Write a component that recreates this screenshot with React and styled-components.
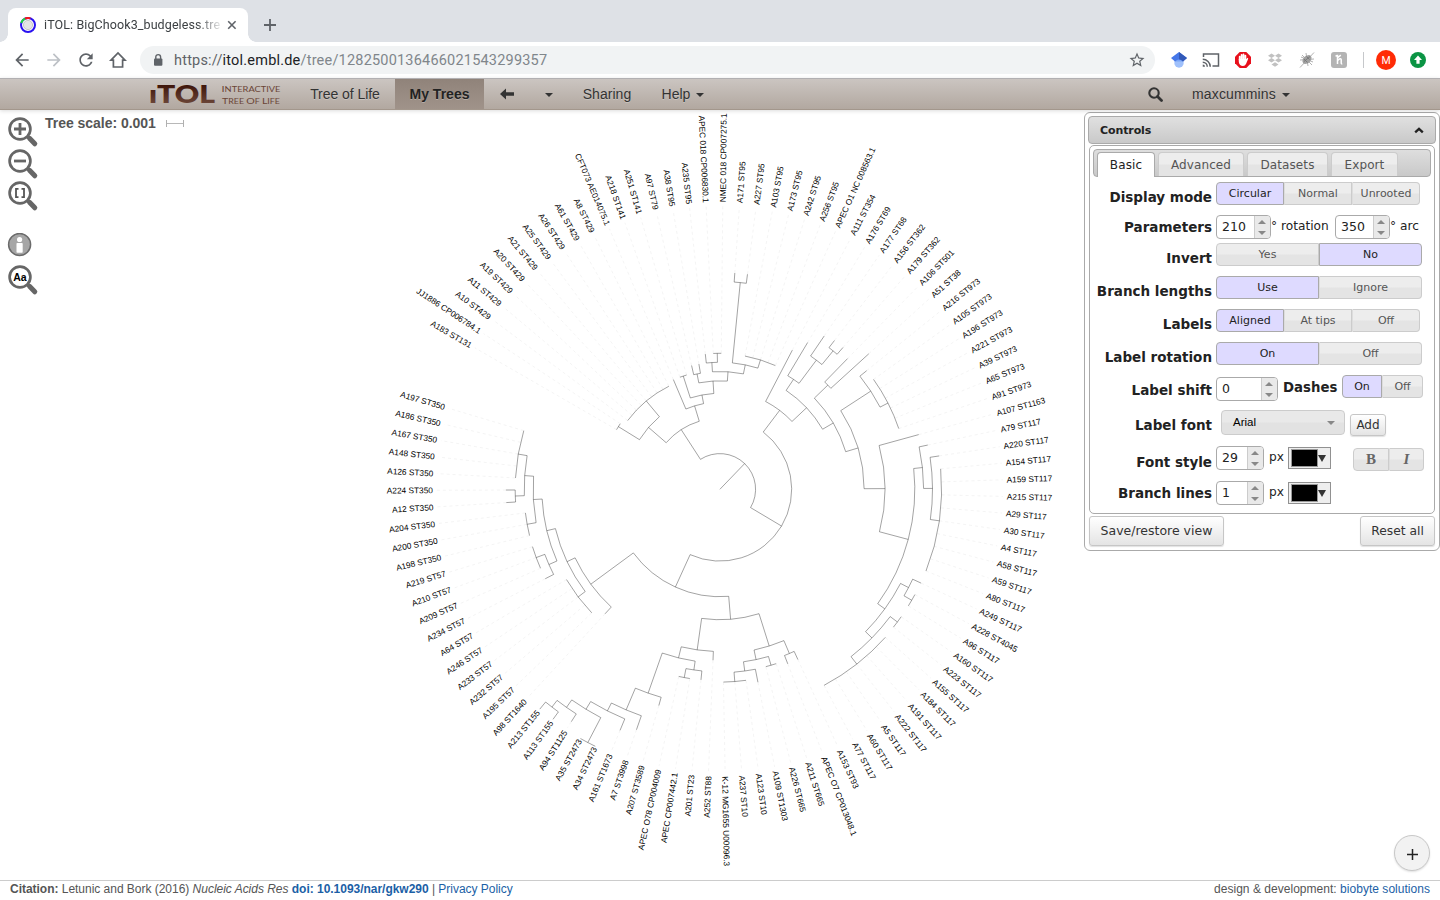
import React from "react";
import styled, { createGlobalStyle, css } from "styled-components";

const GlobalStyle = createGlobalStyle`
  * { box-sizing: border-box; }
  html, body { margin: 0; padding: 0; background: #fff; overflow: hidden; }
  body { font-family: "Liberation Sans", Arial, sans-serif; }
`;

/* ---------- browser chrome ---------- */

const Page = styled.div`
  width: 1440px;
  height: 900px;
  display: flex;
  flex-direction: column;
`;

const TabStrip = styled.div`
  height: 42px;
  flex: none;
  display: flex;
  align-items: flex-end;
  padding-left: 8px;
  background: #dee1e6;
`;

const BrowserTab = styled.div`
  position: relative;
  width: 240px;
  height: 34px;
  display: flex;
  align-items: center;
  padding: 0 10px 0 12px;
  border-radius: 8px 8px 0 0;
  background: #fff;
  &::before, &::after {
    content: "";
    position: absolute;
    bottom: 0;
    width: 8px;
    height: 8px;
  }
  &::before { left: -8px; background: radial-gradient(circle at 0 0, #dee1e6 7.5px, #fff 8px); }
  &::after { right: -8px; background: radial-gradient(circle at 100% 0, #dee1e6 7.5px, #fff 8px); }
`;

const TabTitle = styled.div`
  width: 178px;
  margin-left: 8px;
  padding-bottom: 1px;
  white-space: nowrap;
  font: 12.5px/17px Roboto, sans-serif;
  letter-spacing: 0.1px;
  color: #3c4043;
  mask-image: linear-gradient(90deg, #000 152px, transparent 180px);
`;

const TabClose = styled.svg`margin-left: 5px;`;
const NewTab = styled.svg`margin: 0 0 11px 16px;`;

const AddressRow = styled.div`
  height: 36px;
  flex: none;
  display: flex;
  align-items: center;
  background: #fff;
`;

const NavButtons = styled.div`
  width: 140px;
  display: flex;
  padding-left: 12px;
  gap: 12px;
`;

const Omnibox = styled.div`
  width: 1015px;
  height: 28px;
  display: flex;
  align-items: center;
  padding: 0 9px 0 11px;
  border-radius: 14px;
  background: #f1f3f4;
`;

const Url = styled.div`
  flex: 1;
  margin-left: 9px;
  padding-top: 2px;
  font: 14.5px/20px Roboto, sans-serif;
  letter-spacing: 0.2px;
  color: #80868b;
  b { font-weight: 400; color: #202124; }
  i { font-style: normal; color: #5f6368; }
`;

const Extensions = styled.div`
  display: flex;
  align-items: center;
  flex: 1;
  padding-left: 15px;
`;

const ExtIcon = styled.svg`
  flex: none;
  margin-right: ${(p) => p.$gap ?? 14}px;
`;

/* ---------- site navigation ---------- */

const SiteNav = styled.nav`
  height: 32px;
  flex: none;
  display: flex;
  align-items: stretch;
  padding-left: 148px;
  border-top: 1px solid #b2b0b2;
  border-bottom: 1px solid #a3978c;
  background: linear-gradient(#cbc5c1, #b2a8a0);
  position: relative;
  z-index: 2;
  box-shadow: 0 1px 4px rgba(0, 0, 0, 0.14);
`;

const NavItem = styled.div`
  width: ${(p) => p.$w}px;
  display: flex;
  align-items: center;
  justify-content: ${(p) => (p.$start ? "flex-start" : "center")};
  gap: 6px;
  font-size: 14px;
  letter-spacing: ${(p) => p.$spacing ?? 0}px;
  white-space: nowrap;
  color: #333;
  text-shadow: 0 1px 0 rgba(255, 255, 255, 0.25);
  ${(p) => p.$active && css`
    font-weight: 700;
    color: #222;
    background: linear-gradient(#90837a, #a0938a);
  `}
`;

const Caret = styled.span`
  margin-top: 2px;
  border: 4px solid transparent;
  border-top-color: #333;
  border-bottom: 0;
`;

const NavSpacer = styled.div`flex: 1;`;

/* ---------- workspace ---------- */

const Workspace = styled.main`
  height: 770px;
  flex: none;
  display: grid;
  grid-template-columns: 45px 1039px 356px;
  grid-template-rows: 770px;
`;

const TreeCanvas = styled.svg`
  grid-column: 1 / 4;
  grid-row: 1;
  font-family: "Liberation Sans", Arial, sans-serif;
`;

const ToolColumn = styled.div`
  grid-column: 1;
  grid-row: 1;
  padding: 6px 0 0 7px;
  display: flex;
  flex-direction: column;
`;

const Tool = styled.svg`
  flex: none;
  margin-bottom: ${(p) => p.$after ?? 0}px;
`;

const ScaleLegend = styled.div`
  grid-column: 2;
  grid-row: 1;
  height: 26px;
  display: flex;
  align-items: center;
  gap: 10px;
  font-size: 14px;
  font-weight: 700;
  letter-spacing: -0.03px;
  color: #555;
`;

const ScaleBar = styled.span`
  width: 18px;
  height: 7px;
  border: solid #b0b0b0;
  border-width: 0 1px;
  background: linear-gradient(#b8b8b8, #b8b8b8) center / 100% 1px no-repeat;
`;

const SideColumn = styled.aside`
  grid-column: 3;
  grid-row: 1;
  display: flex;
  flex-direction: column;
  justify-content: space-between;
  align-items: flex-end;
  padding: 2px 0 9px 0;
  font-family: "DejaVu Sans", Verdana, sans-serif;
`;

const AddButton = styled.button`
  width: 36px;
  height: 36px;
  margin-right: 10px;
  padding: 2px 0 0;
  display: flex;
  align-items: center;
  justify-content: center;
  border: 1px solid #c8c8c8;
  border-radius: 50%;
  background: #f2f2f2;
  box-shadow: 0 1px 2px rgba(0, 0, 0, 0.12);
`;

/* ---------- controls panel ---------- */

const Panel = styled.section`
  width: 356px;
  height: 439px;
  padding: 3px 3px 0 3px;
  border: 1px solid #aaa;
  border-radius: 6px;
  background: #fff;
`;

const PanelHeader = styled.header`
  height: 28px;
  display: flex;
  align-items: center;
  justify-content: space-between;
  padding: 0 11px;
  border: 1px solid #aaa;
  border-radius: 4px;
  background: linear-gradient(#e0e0e0, #c9c9c9);
  font-size: 11px;
  font-weight: 700;
  letter-spacing: -0.1px;
  color: #222;
`;

const PanelBody = styled.div`
  height: 369px;
  margin: 1px 1px 0 1px;
  padding: 3px;
  border: 1px solid #aaa;
  border-radius: 5px;
`;

const Tabs = styled.div`
  height: 28px;
  display: flex;
  align-items: flex-end;
  gap: 3px;
  padding-left: 3px;
  border: 1px solid #aaa;
  border-radius: 4px;
  background: linear-gradient(#dedede, #c9c9c9);
`;

const PanelTab = styled.div`
  width: ${(p) => p.$w}px;
  height: 24px;
  display: flex;
  align-items: center;
  justify-content: center;
  border: 1px solid #ccc;
  border-bottom: 0;
  border-radius: 4px 4px 0 0;
  background: linear-gradient(#ededed 49%, #e4e4e4 51%);
  font-size: 12px;
  letter-spacing: 0.1px;
  color: #555;
  ${(p) => p.$active && css`
    height: 25px;
    margin-bottom: -1px;
    padding-bottom: 1px;
    border-color: #aaa;
    background: #fff;
    color: #222;
  `}
`;

const Rows = styled.div`margin-top: 5px;`;

const Row = styled.div`
  height: ${(p) => p.$h}px;
  display: flex;
  align-items: flex-start;
`;

const RowLabel = styled.div`
  width: 119px;
  margin: ${(p) => p.$top}px 4px 0 0;
  text-align: right;
  white-space: nowrap;
  font-size: 13.5px;
  font-weight: 700;
  line-height: 16px;
  color: #222;
`;

const Toggle = styled.div`
  display: flex;
  height: 23px;
  margin: ${(p) => p.$top ?? 0}px 0 0 ${(p) => p.$left ?? 0}px;
`;

const Segment = styled.button`
  width: ${(p) => p.$w}px;
  height: 23px;
  padding: 0;
  border: 1px solid #ccc;
  background: linear-gradient(#ededed 49%, #e4e4e4 51%);
  font: 11px "DejaVu Sans", Verdana, sans-serif;
  color: #555;
  &:first-child { border-radius: 4px 0 0 4px; }
  &:last-child { border-radius: 0 4px 4px 0; }
  & + & { border-left-color: #ddd; }
  ${(p) => p.$on && css`
    border-color: #aaa !important;
    background: #dedaff;
    color: #222;
  `}
  ${(p) => p.$glyph && css`
    font: 700 15px "Liberation Serif", serif;
    color: #666;
  `}
`;

const SpinnerBox = styled.div`
  width: ${(p) => p.$w}px;
  height: 24px;
  margin: ${(p) => p.$top ?? 0}px 0 0 ${(p) => p.$left ?? 0}px;
  flex: none;
  display: flex;
  overflow: hidden;
  border: 1px solid #aaa;
  border-radius: 4px;
  background: #fff;
`;

const SpinnerValue = styled.div`
  flex: 1;
  padding-left: 5px;
  font-size: 12.5px;
  line-height: 21px;
  color: #222;
`;

const SpinnerArrows = styled.div`
  width: 16px;
  padding-right: 1px;
  display: flex;
  flex-direction: column;
  align-items: center;
  justify-content: center;
  gap: 7px;
  border-left: 1px solid #ccc;
  background: #e9e9e9;
  &::before, &::after { content: ""; border: 4px solid transparent; }
  &::before { border-top: 0; border-bottom-color: #888; }
  &::after { border-bottom: 0; border-top-color: #888; }
`;

const Unit = styled.span`
  width: ${(p) => (p.$w ? `${p.$w}px` : "auto")};
  margin: ${(p) => p.$top}px 0 0 ${(p) => p.$left}px;
  font-size: ${(p) => p.$size ?? 12.2}px;
  line-height: 16px;
  white-space: pre;
  font-weight: ${(p) => (p.$bold ? 700 : 400)};
  color: #222;
`;

const FontSelect = styled.div`
  width: 124px;
  height: 25px;
  margin-left: 5px;
  padding: 0 9px 1px 11px;
  display: flex;
  align-items: center;
  justify-content: space-between;
  border: 1px solid #ccc;
  border-radius: 4px;
  background: linear-gradient(#e9e9e9 49%, #e2e2e2 51%);
  font: 11.5px "Liberation Sans", Arial, sans-serif;
  color: #000;
  &::after { content: ""; border: 4px solid transparent; border-bottom: 0; border-top-color: #888; margin-top: 2px; }
`;

const RaisedButton = styled.button`
  width: ${(p) => p.$w}px;
  height: ${(p) => p.$h}px;
  margin: ${(p) => p.$top ?? 0}px 0 0 ${(p) => p.$left ?? 0}px;
  padding: 0 0 1px;
  white-space: nowrap;
  border: 1px solid #c6c6c6;
  border-radius: 3px;
  background: linear-gradient(#fff, #e4e4e4);
  box-shadow: 0 1px 1px rgba(0, 0, 0, 0.12);
  font: ${(p) => p.$size}px "DejaVu Sans", Verdana, sans-serif;
  color: #333;
`;

const ColorPick = styled.div`
  width: 43px;
  height: 22px;
  margin: 1px 0 0;
  padding: 0 4px 0 2px;
  display: flex;
  align-items: center;
  justify-content: space-between;
  border: 1px solid #919191;
  background: #eee;
  &::before { content: ""; width: 26px; height: 16px; border: 1px solid #999; background: #000; }
  &::after { content: ""; border: 4px solid transparent; border-top: 7px solid #333; border-bottom: 0; }
`;

const PanelFooter = styled.footer`
  display: flex;
  justify-content: space-between;
  margin: 2px 1px 0 1px;
`;

/* ---------- page footer ---------- */

const Footer = styled.footer`
  height: 20px;
  flex: none;
  display: flex;
  justify-content: space-between;
  padding: 0 10px;
  border-top: 1px solid #ccc;
  font-size: 12px;
  line-height: 16px;
  color: #555;
  a { color: #1c5fa6; }
`;

const FooterText = styled.span`letter-spacing: ${(p) => p.$spacing}px;`;

/* ---------- phylogeny data ---------- */

const LABELS = [
  "A183 ST131", "JJ1886 CP006784.1", "A10 ST429", "A11 ST429", "A19 ST429", "A20 ST429", "A21 ST429",
  "A25 ST429", "A26 ST429", "A61 ST429", "A8 ST429", "CFT073 AE014075.1", "A218 ST141", "A251 ST141",
  "A97 ST79", "A38 ST95", "A235 ST95", "APEC 018 CP006830.1", "NMEC 018 CP007275.1", "A171 ST95",
  "A227 ST95", "A103 ST95", "A173 ST95", "A242 ST95", "A256 ST95", "APEC O1 NC 008563.1", "A111 ST354",
  "A176 ST69", "A177 ST68", "A156 ST362", "A179 ST362", "A106 ST501", "A51 ST38", "A216 ST973",
  "A105 ST973", "A196 ST973", "A221 ST973", "A39 ST973", "A65 ST973", "A91 ST973", "A107 ST1163",
  "A79 ST117", "A220 ST117", "A154 ST117", "A159 ST117", "A215 ST117", "A29 ST117", "A30 ST117",
  "A4 ST117", "A58 ST117", "A59 ST117", "A80 ST117", "A249 ST117", "A228 ST4045", "A96 ST117",
  "A160 ST117", "A223 ST117", "A155 ST117", "A184 ST117", "A191 ST117", "A222 ST117", "A5 ST117",
  "A60 ST117", "A77 ST117", "A153 ST93", "APEC O7 CP013048.1", "A211 ST665", "A226 ST665",
  "A109 ST1303", "A123 ST10", "A237 ST10", "K-12 MG1655 U00096.3", "A252 ST88", "A201 ST23",
  "APEC CP007442.1", "APEC O78 CP004009", "A207 ST3589", "A7 ST3998", "A161 ST1673", "A34 ST2473",
  "A35 ST2473", "A94 ST1125", "A113 ST155", "A213 ST155", "A98 ST1640", "A195 ST57", "A232 ST57",
  "A233 ST57", "A246 ST57", "A64 ST57", "A234 ST57", "A209 ST57", "A210 ST57", "A219 ST57",
  "A198 ST350", "A200 ST350", "A204 ST350", "A12 ST350", "A224 ST350", "A126 ST350", "A148 ST350",
  "A167 ST350", "A186 ST350", "A197 ST350",
];

// A clade is [radius, ...children]; a bare number is a leaf at that radius.
const tips = (radius, count) => [radius, ...Array(count).fill(radius)];

const TREE = [35.7,
  [71.1,
    [94.5, tips(119.3, 2), tips(115, 9)],
    [87.2, 119.2,
      [96, tips(119, 2),
        [108.5,
          [117.6, 127, 127],
          [117.8, [127, 136, tips(136, 2)], [127, [207.7, 216.8, 216.8], tips(135.6, 5)]],
        ],
      ],
    ],
  ],
  [71.8,
    [99, 156.9,
      [119,
        [132.3, 171, [161.2, 185.4, [178.8, 187.8, 187.8]]],
        [131.3,
          [150, 182.7, 201.3],
          [144.2,
            [180, 188.7, tips(188.9, 6)],
            [165.1, 206.2,
              [194.9,
                [203.7, 212.5, [212.6, 221.8, tips(221.7, 9)]],
                [203.7,
                  [212.7, 222, tips(221.6, 2)],
                  [212.6, tips(221.6, 2), tips(222, 7)],
                ],
              ],
            ],
          ],
        ],
      ],
    ],
    [107.4,
      [130.4,
        [164.3,
          [178.3, 187.3, 187.3],
          [174.1, tips(183.2, 2), [183.4, 196.7, tips(192.8, 3)]],
        ],
        [162.2, 171.1,
          [173.6,
            [182.5, 191.5, tips(191.6, 2)],
            [216.1, 224.7,
              [239.7, 254.5,
                [248.5, 260.9,
                  [257.5, tips(285.6, 2),
                    [266.6, 275.8, [275, 284.2, 284.2]],
                  ],
                ],
              ],
            ],
          ],
        ],
      ],
      [160.2, 169.4,
        [169.1, tips(178, 5),
          [178,
            [186.8, 196.2, tips(196, 3)],
            [186.8, tips(195.9, 3), [195.7, [204.7, 214, 214], tips(204.7, 5)]],
          ],
        ],
      ],
    ],
  ],
];

const CENTER = [719.9, 379.3];
const FIRST_ANGLE = 210;
const STEP = 350 / 104;
const LABEL_RADIUS = 287;

const point = (radius, angle) => {
  const t = (angle * Math.PI) / 180;
  return [CENTER[0] + radius * Math.cos(t), CENTER[1] + radius * Math.sin(t)].map((n) => n.toFixed(2)).join(" ");
};

function layoutTree() {
  const branches = [];
  const leaves = [];
  const place = (node, parentRadius) => {
    if (typeof node === "number") {
      const angle = FIRST_ANGLE + leaves.length * STEP;
      leaves.push({ angle, radius: node });
      if (node > parentRadius) branches.push(`M${point(parentRadius, angle)}L${point(node, angle)}`);
      return angle;
    }
    const [radius, ...children] = node;
    const angles = children.map((child) => place(child, radius));
    const first = angles[0];
    const last = angles[angles.length - 1];
    const middle = (first + last) / 2;
    const large = last - first > 180 ? 1 : 0;
    branches.push(`M${point(radius, first)}A${radius} ${radius} 0 ${large} 1 ${point(radius, last)}`);
    branches.push(`M${point(parentRadius, middle)}L${point(radius, middle)}`);
    return middle;
  };
  place(TREE, 0);
  return { branches, leaves };
}

const { branches, leaves } = layoutTree();

function Phylogeny() {
  return (
    <TreeCanvas width="1440" height="770" viewBox="0 0 1440 770">
      <g stroke="#f1f1f1" strokeWidth="0.8" strokeDasharray="3 3" fill="none">
        {leaves.map(({ angle, radius }, i) => (
          radius < 278 && <path key={i} d={`M${point(radius, angle)}L${point(283, angle)}`} />
        ))}
      </g>
      <path d={branches.join("")} fill="none" stroke="#000" strokeOpacity="0.72" strokeWidth="0.5" />
      <g fontSize="8.3" fill="#000">
        {leaves.map(({ angle }, i) => {
          const a = angle % 360;
          const flip = a > 90 && a < 270;
          return (
            <text
              key={i}
              transform={`translate(${point(LABEL_RADIUS, angle)}) rotate(${(flip ? a + 180 : a).toFixed(2)})`}
              y="3"
              textAnchor={flip ? "end" : "start"}
            >
              {LABELS[i]}
            </text>
          );
        })}
      </g>
    </TreeCanvas>
  );
}

/* ---------- small pieces ---------- */

function Magnifier({ children, after }) {
  return (
    <Tool width="32" height="32" viewBox="0 0 32 32" $after={after}>
      <path d="M22.5 22.3L27.8 27.8" stroke="#666" strokeWidth="5" strokeLinecap="round" />
      <path d="M20 20l3 3" stroke="#666" strokeWidth="2.5" />
      <circle cx="13" cy="13" r="10.4" fill="#fff" stroke="#666" strokeWidth="2.7" />
      {children}
    </Tool>
  );
}

function Spinner({ value, ...box }) {
  return (
    <SpinnerBox {...box}>
      <SpinnerValue>{value}</SpinnerValue>
      <SpinnerArrows />
    </SpinnerBox>
  );
}

function Choice({ options, on, widths, ...box }) {
  return (
    <Toggle {...box}>
      {options.map((name, i) => (
        <Segment key={name} $w={widths[i]} $on={name === on}>{name}</Segment>
      ))}
    </Toggle>
  );
}

function ControlsPanel() {
  return (
    <Panel>
      <PanelHeader>
        Controls
        <svg width="10" height="7" viewBox="0 0 10 7"><path d="M1.2 5.4L5 1.8l3.8 3.6" fill="none" stroke="#222" strokeWidth="2.3" /></svg>
      </PanelHeader>
      <PanelBody>
        <Tabs>
          <PanelTab $w={58} $active>Basic</PanelTab>
          <PanelTab $w={86}>Advanced</PanelTab>
          <PanelTab $w={81}>Datasets</PanelTab>
          <PanelTab $w={67}>Export</PanelTab>
        </Tabs>
        <Rows>
          <Row $h={33}>
            <RowLabel $top={7}>Display mode</RowLabel>
            <Choice options={["Circular", "Normal", "Unrooted"]} on="Circular" widths={[68, 68, 68]} />
          </Row>
          <Row $h={28}>
            <RowLabel $top={4}>Parameters</RowLabel>
            <Spinner $w={55} value="210" />
            <Unit $left={0} $top={3} $w={64}>° rotation</Unit>
            <Spinner $w={55} value="350" />
            <Unit $left={0} $top={3}>° arc</Unit>
          </Row>
          <Row $h={33}>
            <RowLabel $top={7}>Invert</RowLabel>
            <Choice options={["Yes", "No"]} on="No" widths={[103, 103]} />
          </Row>
          <Row $h={33}>
            <RowLabel $top={7}>Branch lengths</RowLabel>
            <Choice options={["Use", "Ignore"]} on="Use" widths={[103, 103]} />
          </Row>
          <Row $h={33}>
            <RowLabel $top={7}>Labels</RowLabel>
            <Choice options={["Aligned", "At tips", "Off"]} on="Aligned" widths={[68, 68, 68]} />
          </Row>
          <Row $h={33}>
            <RowLabel $top={7}>Label rotation</RowLabel>
            <Choice options={["On", "Off"]} on="On" widths={[103, 103]} />
          </Row>
          <Row $h={35}>
            <RowLabel $top={7}>Label shift</RowLabel>
            <Spinner $w={62} $top={2} value="0" />
            <Unit $left={5} $top={5} $size={13.3} $bold $w={59}>Dashes</Unit>
            <Choice options={["On", "Off"]} on="On" widths={[40, 41]} />
          </Row>
          <Row $h={36}>
            <RowLabel $top={7}>Label font</RowLabel>
            <FontSelect>Arial</FontSelect>
            <RaisedButton $w={36} $h={22} $top={4} $left={5} $size={12}>Add</RaisedButton>
          </Row>
          <Row $h={35}>
            <RowLabel $top={8}>Font style</RowLabel>
            <Spinner $w={48} value="29" />
            <Unit $left={5} $top={3} $w={19}>px</Unit>
            <ColorPick />
            <Toggle $left={22} $top={2}>
              <Segment $w={36} $glyph>B</Segment>
              <Segment $w={35} $glyph><i>I</i></Segment>
            </Toggle>
          </Row>
          <Row $h={30}>
            <RowLabel $top={4}>Branch lines</RowLabel>
            <Spinner $w={48} value="1" />
            <Unit $left={5} $top={3} $w={19}>px</Unit>
            <ColorPick />
          </Row>
        </Rows>
      </PanelBody>
      <PanelFooter>
        <RaisedButton $w={135} $h={30} $size={12.5}>Save/restore view</RaisedButton>
        <RaisedButton $w={75} $h={30} $size={12.3}>Reset all</RaisedButton>
      </PanelFooter>
    </Panel>
  );
}

function BrowserBar() {
  return (
    <>
      <TabStrip>
        <BrowserTab>
          <svg width="16" height="16" viewBox="0 0 16 16">
            <circle cx="8" cy="8" r="4.6" fill="#e4e4e4" stroke="#bbb" strokeWidth="0.8" />
            <circle cx="8" cy="8" r="7" fill="none" stroke="#2a12f0" strokeWidth="2" />
            <path d="M5 1.7A7 7 0 0 1 10.4 1.4" fill="none" stroke="#f01818" strokeWidth="2" />
            <path d="M1.2 6A7 7 0 0 1 5 1.7" fill="none" stroke="#20d838" strokeWidth="2" />
          </svg>
          <TabTitle>iTOL: BigChook3_budgeless.tre</TabTitle>
          <TabClose width="10" height="10" viewBox="0 0 10 10"><path d="M1.2 1.2l7.4 7.6M8.6 1.2L1.2 8.8" stroke="#5f6368" strokeWidth="1.6" /></TabClose>
        </BrowserTab>
        <NewTab width="12" height="12" viewBox="0 0 12 12"><path d="M6 0v12M0 6h12" stroke="#5f6368" strokeWidth="1.8" /></NewTab>
      </TabStrip>
      <AddressRow>
        <NavButtons>
          <svg width="20" height="20" viewBox="0 0 24 24"><path fill="#5f6368" d="M20 11H7.83l5.59-5.59L12 4l-8 8 8 8 1.41-1.41L7.83 13H20v-2z" /></svg>
          <svg width="20" height="20" viewBox="0 0 24 24"><path fill="#bdc1c6" d="M12 4l-1.41 1.41L16.17 11H4v2h12.17l-5.58 5.59L12 20l8-8z" /></svg>
          <svg width="20" height="20" viewBox="0 0 24 24"><path fill="#5f6368" d="M17.65 6.35C16.2 4.9 14.21 4 12 4c-4.42 0-7.99 3.58-7.99 8s3.57 8 7.99 8c3.73 0 6.84-2.55 7.73-6h-2.08c-.82 2.33-3.04 4-5.65 4-3.31 0-6-2.69-6-6s2.69-6 6-6c1.66 0 3.14.69 4.22 1.78L13 11h7V4l-2.35 2.35z" /></svg>
          <svg width="20" height="20" viewBox="0 0 20 20"><path d="M3 10.2L10 3l7 7.2h-2.4V17H5.4v-6.8z" fill="none" stroke="#5f6368" strokeWidth="1.7" /></svg>
        </NavButtons>
        <Omnibox>
          <svg width="14" height="14" viewBox="0 0 14 14"><rect x="3" y="5.5" width="8.4" height="7.2" rx="1" fill="#5f6368" /><path d="M4.8 6V4a2.4 2.4 0 0 1 4.8 0v2" fill="none" stroke="#5f6368" strokeWidth="1.4" /></svg>
          <Url><i>https://</i><b>itol.embl.de</b>/tree/1282500136466021543299357</Url>
          <svg width="18" height="18" viewBox="0 0 24 24"><path fill="#5f6368" d="M22 9.24l-7.19-.62L12 2 9.19 8.63 2 9.24l5.46 4.73L5.82 21 12 17.27 18.18 21l-1.63-7.03L22 9.24zM12 15.4l-3.76 2.27 1-4.28-3.32-2.88 4.38-.38L12 6.1l1.71 4.04 4.38.38-3.32 2.88 1 4.28L12 15.4z" /></svg>
        </Omnibox>
        <Extensions>
          <ExtIcon width="18" height="18" viewBox="0 0 18 18">
            <circle cx="9" cy="12" r="4.7" fill="#9fc0fb" />
            <path d="M4.5 10.5a5 5 0 0 1 9 0z" fill="#7aa5f5" />
            <path d="M9 1L1 7l4 3.5Q9 6.5 13 10.5L17 7z" fill="#4577e8" />
            <path d="M9 1l8 6-4 3.500Q11.500 8.500 9 8.200z" fill="#3259b8" />
          </ExtIcon>
          <ExtIcon width="18" height="18" viewBox="0 0 24 24">
            <path d="M2 8V4h20v16h-8" fill="none" stroke="#5f6368" strokeWidth="2" />
            <path d="M1 11a10 10 0 0 1 10 10M1 15a6 6 0 0 1 6 6" fill="none" stroke="#5f6368" strokeWidth="2" />
            <path d="M1 18v3h3a3 3 0 0 0-3-3z" fill="#5f6368" />
          </ExtIcon>
          <ExtIcon width="18" height="18" viewBox="0 0 18 18">
            <path d="M5.7 1h6.6L17 5.7v6.6L12.3 17H5.7L1 12.3V5.7z" fill="#e8101c" />
            <path d="M5.7 9V5.7M7.6 8.5V3.9M9.5 8.5V3.5M11.4 8.5V4.7" stroke="#fff" strokeWidth="1.8" strokeLinecap="round" />
            <path d="M4.8 8h7.5l1.3-1.3q1 .3.4 1.5L12 13q-1 2-3 2-3.600 0-4.200-4z" fill="#fff" />
          </ExtIcon>
          <ExtIcon width="18" height="18" viewBox="0 0 18 18"><path fill="#c1c1c1" d="M5.5 2.5L9 4.8 5.5 7 2 4.8zM12.5 2.5L16 4.8 12.5 7 9 4.8zM5.5 7L9 9.3l-3.5 2.2L2 9.3zM12.5 7L16 9.3l-3.5 2.2L9 9.3zM9 11.3l3.5 2.2L9 15.7l-3.5-2.2z" /></ExtIcon>
          <ExtIcon width="18" height="18" viewBox="0 0 18 18">
            <path d="M2 16.5L16 1.5M4 4l10 10M2 9l14-1M8 2l2 13M3 6l12 5" stroke="#a9a9a9" strokeWidth="0.9" />
            <ellipse cx="9" cy="8.5" rx="5.2" ry="3.6" transform="rotate(-42 9 8.5)" fill="#a0a0a0" />
            <path d="M6 8l3.5 3.5M8.5 5.5l3 3M6 10.5l6-5" stroke="#777" strokeWidth="0.9" />
          </ExtIcon>
          <ExtIcon width="18" height="18" viewBox="0 0 18 18" $gap={15}>
            <rect x="1" y="1" width="16" height="16" rx="3" fill="#b4b4b4" />
            <path d="M5.5 5q2-.3 2-1.3v9.3M7.6 9.5q2.9-3 3.6-1v3.6q0 1 1 .4M7.3 7l3.5-2.8" fill="none" stroke="#fff" strokeWidth="1.5" />
          </ExtIcon>
          <ExtIcon width="1" height="16" $gap={11}><rect width="1" height="16" fill="#c6c8cb" /></ExtIcon>
          <ExtIcon width="22" height="22" viewBox="0 0 22 22" $gap={13}>
            <circle cx="11" cy="11" r="10" fill="#ff2b06" />
            <text x="11" y="14.8" textAnchor="middle" fill="#fff" fontFamily="Roboto, sans-serif" fontSize="10.5">M</text>
          </ExtIcon>
          <ExtIcon width="16" height="16" viewBox="0 0 16 16"><circle cx="8" cy="8" r="8" fill="#0b9444" /><path d="M8 3.6L12 8H9.6v3.8H6.4V8H4z" fill="#fff" /></ExtIcon>
        </Extensions>
      </AddressRow>
    </>
  );
}

function SiteBar() {
  return (
    <SiteNav>
      <svg width="147" height="30" viewBox="148 79 147 30" overflow="visible">
        <defs><linearGradient id="logo" x1="0" y1="0" x2="0" y2="1"><stop offset="0.2" stopColor="#3d1409" /><stop offset="0.85" stopColor="#6b4537" /></linearGradient></defs>
        <text x="149" y="102.8" fontFamily="Lato, sans-serif" fontSize="24.8" fontWeight="800" fill="url(#logo)" textLength="66" lengthAdjust="spacingAndGlyphs">ıTOL</text>
        <g fontFamily="Lato, sans-serif" fill="#6b4537">
          <text x="221.5" y="92" textLength="59" lengthAdjust="spacingAndGlyphs"><tspan fontSize="8.4">I</tspan><tspan fontSize="7">NTERACTIVE</tspan></text>
          <text x="222" y="103.5" textLength="58" lengthAdjust="spacingAndGlyphs"><tspan fontSize="8.4">T</tspan><tspan fontSize="7">REE </tspan><tspan fontSize="8.4">O</tspan><tspan fontSize="7">F </tspan><tspan fontSize="8.4">L</tspan><tspan fontSize="7">IFE</tspan></text>
        </g>
      </svg>
      <NavItem $w={100} $spacing={-0.05}>Tree of Life</NavItem>
      <NavItem $w={89} $active>My Trees</NavItem>
      <NavItem $w={45}>
        <svg width="14" height="12" viewBox="0 0 14 12"><path d="M0 6l6-5.5v3.7h8v3.6H6v3.7z" fill="#333" /></svg>
      </NavItem>
      <NavItem $w={40}><Caret /></NavItem>
      <NavItem $w={76} $spacing={0.05}>Sharing</NavItem>
      <NavItem $w={76}>Help <Caret /></NavItem>
      <NavSpacer />
      <NavItem $w={44} $start>
        <svg width="15" height="15" viewBox="0 0 15 15"><circle cx="6" cy="6" r="4.7" fill="none" stroke="#333" strokeWidth="2.1" /><path d="M9.500 9.500l4 4" stroke="#333" strokeWidth="2.8" strokeLinecap="round" /></svg>
      </NavItem>
      <NavItem $w={248} $start $spacing={0.15}>maxcummins <Caret /></NavItem>
    </SiteNav>
  );
}

export default function App() {
  return (
    <Page>
      <GlobalStyle />
      <BrowserBar />
      <SiteBar />
      <Workspace>
        <Phylogeny />
        <ToolColumn>
          <Magnifier><path d="M13 7v12M7 13h12" stroke="#666" strokeWidth="2.8" /></Magnifier>
          <Magnifier><path d="M7 13h12" stroke="#666" strokeWidth="2.8" /></Magnifier>
          <Magnifier after={21}><path d="M11.5 8.8H9v8.4h2.5M14.5 8.8H17v8.4h-2.5" fill="none" stroke="#555" strokeWidth="1.8" /></Magnifier>
          <Tool width="26" height="26" viewBox="0 0 26 26" $after={5}>
            <circle cx="12.6" cy="11.5" r="11" fill="#a6a6a6" stroke="#6b6b6b" strokeWidth="1.5" />
            <circle cx="12.6" cy="6.5" r="2.6" fill="#fff" /><rect x="9.5" y="10" width="6.2" height="9.8" rx="0.8" fill="#fff" />
          </Tool>
          <Magnifier><text x="13" y="16.900" textAnchor="middle" fontSize="10.5" fontWeight="700" fill="#000">Aa</text></Magnifier>
        </ToolColumn>
        <ScaleLegend>Tree scale: 0.001 <ScaleBar /></ScaleLegend>
        <SideColumn>
          <ControlsPanel />
          <AddButton><svg width="11" height="11" viewBox="0 0 11 11"><path d="M5.5 0v11M0 5.5h11" stroke="#222" strokeWidth="1.5" /></svg></AddButton>
        </SideColumn>
      </Workspace>
      <Footer>
        <FooterText $spacing={-0.024}><b>Citation:</b> Letunic and Bork (2016) <i>Nucleic Acids Res</i> <a><b>doi: 10.1093/nar/gkw290</b></a> | <a>Privacy Policy</a></FooterText>
        <FooterText $spacing={0.03}>design &amp; development: <a>biobyte solutions</a></FooterText>
      </Footer>
    </Page>
  );
}
